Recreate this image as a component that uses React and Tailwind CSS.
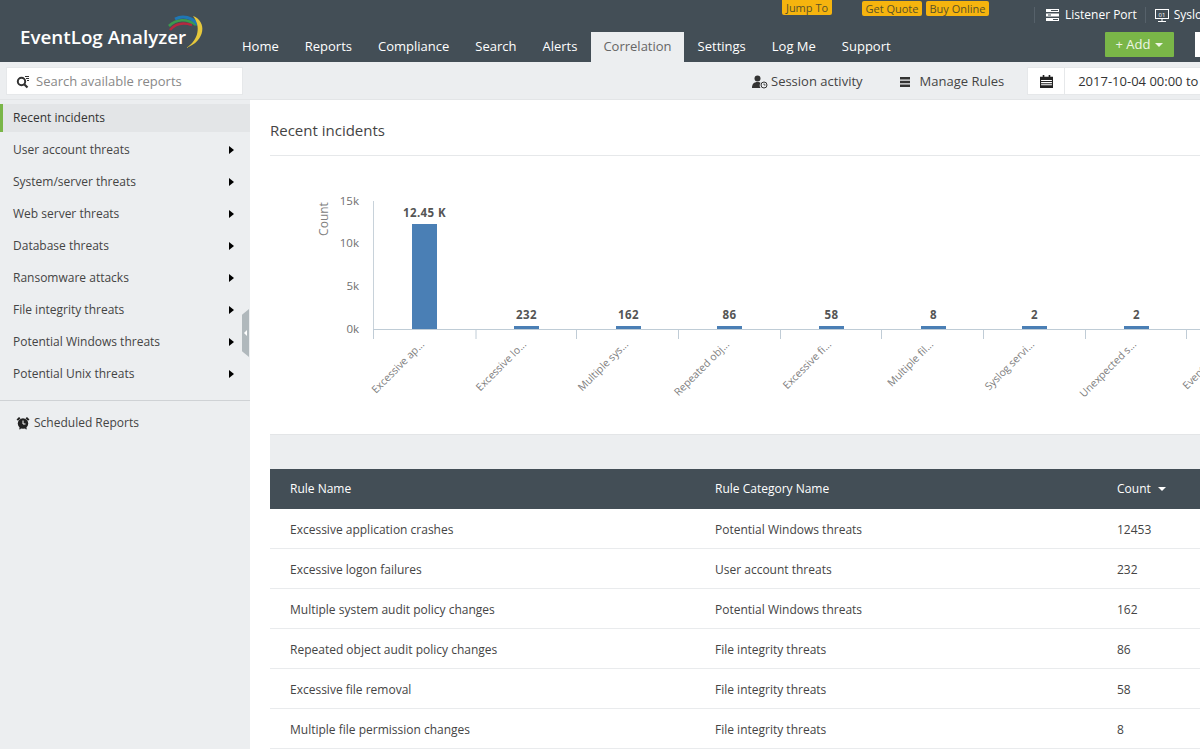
import React from 'react';

const navItems = ['Home', 'Reports', 'Compliance', 'Search', 'Alerts', 'Correlation', 'Settings', 'Log Me', 'Support'];

const sideItems = [
  'User account threats',
  'System/server threats',
  'Web server threats',
  'Database threats',
  'Ransomware attacks',
  'File integrity threats',
  'Potential Windows threats',
  'Potential Unix threats',
];

const rows = [
  ['Excessive application crashes', 'Potential Windows threats', '12453'],
  ['Excessive logon failures', 'User account threats', '232'],
  ['Multiple system audit policy changes', 'Potential Windows threats', '162'],
  ['Repeated object audit policy changes', 'File integrity threats', '86'],
  ['Excessive file removal', 'File integrity threats', '58'],
  ['Multiple file permission changes', 'File integrity threats', '8'],
];

const bars = [
  { x: 142, h: 105, value: '12.45 K', label: 'Excessive ap...' },
  { x: 244, h: 3, value: '232', label: 'Excessive lo...' },
  { x: 346, h: 3, value: '162', label: 'Multiple sys...' },
  { x: 447, h: 3, value: '86', label: 'Repeated obj...' },
  { x: 549, h: 3, value: '58', label: 'Excessive fi...' },
  { x: 651, h: 3, value: '8', label: 'Multiple fil...' },
  { x: 752, h: 3, value: '2', label: 'Syslog servi...' },
  { x: 854, h: 3, value: '2', label: 'Unexpected s...' },
];

const ticks = [103, 205.5, 306, 408, 510, 611, 713, 815, 916];

const Logo = () => (
  <svg width="46" height="36" viewBox="0 0 46 36" className="absolute left-[167px] top-[15px]">
    <path d="M3 15 C8 9 16 7 25 10" fill="none" stroke="#b5293f" strokeWidth="2.4" />
    <path d="M2 11 C9 4 20 3 29 10" fill="none" stroke="#3c9a4e" strokeWidth="2.6" />
    <path d="M8 4 C16 0 25 2 31 10" fill="none" stroke="#1f77b4" strokeWidth="3" />
    <path d="M26 1 C40 6 39 26 19 33 C32 25 34 11 26 1 Z" fill="#e6c83c" />
  </svg>
);

const Chart = () => (
  <svg width="930" height="278" viewBox="0 0 930 278" className="block" style={{ fontFamily: '"Open Sans", sans-serif' }}>
    <text x="0" y="0" transform="translate(58 63) rotate(-90)" textAnchor="middle" fontSize="12" fill="#808080">Count</text>
    {[['15k', 49], ['10k', 91], ['5k', 134], ['0k', 177]].map(([t, y]) => (
      <text key={t} x="89" y={y} textAnchor="end" fontSize="11.5" fill="#707070">{t}</text>
    ))}
    <path d="M103.5 45V173" stroke="#c8d2da" />
    <path d="M103 173.5H930" stroke="#bfccd6" />
    {ticks.map((x) => (
      <path key={x} d={`M${x + 0.5} 173V183`} stroke="#c0ccd6" />
    ))}
    {bars.map((b) => (
      <g key={b.label}>
        <rect x={b.x} y={173 - b.h} width="25" height={b.h} fill="#4a7fb5" />
        <text x={b.x + 12.5} y={173 - b.h - 7} textAnchor="middle" fontSize="11.5" fontWeight="700" letterSpacing="0.4" fill="#555">{b.value}</text>
        <text transform={`translate(${b.x + 13} 189) rotate(-45)`} textAnchor="end" fontSize="10.5" fill="#808080">{b.label}</text>
      </g>
    ))}
    <text transform="translate(917 234) rotate(-45)" fontSize="10.5" fill="#808080">Event log...</text>
  </svg>
);

export default function App() {
  return (
    <div className="w-[1200px] h-[749px] overflow-hidden flex flex-col bg-white text-[#444] font-['Open_Sans',sans-serif]">
      {/* Header */}
      <header className="h-[62px] shrink-0 flex bg-[#434e56] text-white">
        <div className="relative w-[229px] shrink-0 pl-[20px] pt-[24px]">
          <span className="text-[18.8px] leading-[26px] font-semibold whitespace-nowrap">EventLog Analyzer</span>
          <Logo />
        </div>
        <div className="w-[971px] shrink-0 flex flex-col overflow-hidden">
          <div className="h-[32px] flex items-start text-[11px] text-[#5a5228]">
            <span className="shrink-0 ml-[553px] w-[50px] h-[15px] leading-[15px] text-center bg-[#f6b40e] rounded-b-[2px]">Jump To</span>
            <span className="shrink-0 ml-[30px] mt-px w-[60px] h-[15px] leading-[15px] text-center bg-[#f6b40e] rounded-[2px]">Get Quote</span>
            <span className="shrink-0 ml-[4px] mt-px w-[63px] h-[15px] leading-[15px] text-center bg-[#f6b40e] rounded-[2px]">Buy Online</span>
            <span className="shrink-0 ml-[45px] mt-[7px] h-[16px] w-px bg-[#56616a]" />
            <span className="shrink-0 ml-[11px] mt-[7px] h-[16px] flex items-center gap-[6px] text-[12px] text-white whitespace-nowrap">
              <svg width="13" height="12" viewBox="0 0 13 12" fill="#fff">
                <path d="M0 0h13v3H0zM0 4.500h13v3H0zM0 9h13v3H0z" />
                <path d="M5 1h7v1H5zM2 5.500h3v1H2zM7 10h5v1H7z" fill="#434e56" />
              </svg>
              Listener Port
            </span>
            <span className="shrink-0 ml-[8px] mt-[7px] h-[16px] w-px bg-[#56616a]" />
            <span className="shrink-0 ml-[9px] mt-[7px] h-[16px] flex items-center gap-[5px] text-[12px] text-white whitespace-nowrap">
              <svg width="14" height="13" viewBox="0 0 14 13" fill="none" stroke="#fff">
                <rect x="0.500" y="0.500" width="13" height="9" />
                <path d="M3 12.500h8M7 10v2" />
                <text x="7" y="7.500" textAnchor="middle" fontSize="6" fill="#fff" stroke="none">01</text>
              </svg>
              Syslog
            </span>
          </div>
          <div className="h-[30px] flex items-start">
            <nav className="flex items-stretch h-[30px] shrink-0 pl-px text-[13px] gap-[2px] w-[876px]">
              {navItems.map((item) => (
                <span
                  key={item}
                  className={
                    item === 'Correlation'
                      ? 'px-3 leading-[29px] bg-[#eceef0] text-[#666]'
                      : 'px-3 leading-[29px] text-white'
                  }
                >
                  {item}
                </span>
              ))}
            </nav>
            <button className="w-[69px] h-[25px] shrink-0 flex items-center justify-center gap-[5px] bg-[#7ab648] text-[13px] text-[#eef6e4] rounded-[1px]">
              + Add
              <span className="w-0 h-0 border-x-[4px] border-x-transparent border-t-[4px] border-t-[#eef6e4]" />
            </button>
            <span className="ml-[21px] w-[10px] h-[25px] shrink-0 bg-white" />
          </div>
        </div>
      </header>

      <div className="flex flex-1 min-h-0">
        {/* Sidebar */}
        <aside className="relative w-[250px] shrink-0 bg-[#eceef0] text-[12px] text-[#444]">
          <div className="h-[38px] pt-[5px] px-[6px] border-b border-[#e3e5e7]">
            <div className="h-[28px] w-[237px] flex items-center gap-[6px] pl-[9px] pt-px bg-white border border-[#e6e8ea] text-[13px] text-[#888]">
              <svg width="14" height="14" viewBox="0 0 14 14" fill="none" stroke="#333" className="shrink-0">
                <circle cx="5.500" cy="6.500" r="3.700" strokeWidth="2" />
                <path d="M8 9l3.500 3.500" strokeWidth="2.200" />
                <path d="M9 1.500h4M10 3.500h3M11 5.500h2" strokeWidth="1" />
              </svg>
              Search available reports
            </div>
          </div>
          <div className="h-[28px] mt-[4px] flex items-center pl-[10px] border-l-[3px] border-[#7ab648] bg-[#e3e5e7] text-[#333]">
            Recent incidents
          </div>
          <ul className="mb-[10px] pt-[2px]">
            {sideItems.map((item) => (
              <li key={item} className="h-[32px] flex items-center justify-between pl-[13px] pr-[16px]">
                {item}
                <span className="w-0 h-0 border-y-[4px] border-y-transparent border-l-[5px] border-l-black" />
              </li>
            ))}
          </ul>
          <div className="h-[44px] flex items-center gap-[4px] pl-[16px] border-t border-[#cfd2d5]">
            <svg width="14" height="14" viewBox="0 0 14 14" className="shrink-0">
              <circle cx="7" cy="7.500" r="5.200" fill="#222" />
              <path d="M7 4.500V8h2.500" fill="none" stroke="#fff" />
              <path d="M0.500 3.500L3 1l1.500 1.200L2 4.800zM13.500 3.500L11 1 9.500 2.200 12 4.800zM3 13l1.500-2 1 .8L4 13.500zM11 13L9.500 11l-1 .8L10 13.500z" fill="#222" />
            </svg>
            Scheduled Reports
          </div>
          {/* collapse handle */}
          <div className="absolute left-[242px] top-[247px] w-[7px] h-[48px] bg-[#b0b8bc] flex items-center justify-center [clip-path:polygon(0_12%,100%_0,100%_100%,0_88%)]">
            <span className="w-0 h-0 border-y-[3px] border-y-transparent border-r-[3px] border-r-white" />
          </div>
        </aside>

        {/* Main */}
        <main className="w-[950px] shrink-0 flex flex-col">
          <div className="h-[38px] shrink-0 flex items-start bg-[#eceef0] border-b border-[#e3e5e7] text-[13px] text-[#444]">
            <span className="ml-[502px] h-[40px] shrink-0 flex items-center gap-[3px] whitespace-nowrap">
              <svg width="16" height="14" viewBox="0 0 16 14" className="shrink-0">
                <circle cx="5.500" cy="3.500" r="3" fill="#333" />
                <path d="M0 13c0-4 2-6 5.500-6 1.500 0 2.500.4 3 1-1 1.200-1.200 3.500 0 5z" fill="#333" />
                <circle cx="12" cy="10" r="3" fill="none" stroke="#333" />
                <path d="M12 8.500V10h1.500" fill="none" stroke="#333" strokeWidth="0.800" />
              </svg>
              Session activity
            </span>
            <span className="ml-[37px] h-[40px] shrink-0 flex items-center gap-[10px] whitespace-nowrap">
              <svg width="10" height="10" viewBox="0 0 10 10" fill="#333" className="shrink-0">
                <path d="M0 0h10v2.500H0zM0 3.700h10v2.500H0zM0 7.500h10V10H0z" />
              </svg>
              Manage Rules
            </span>
            <div className="ml-[23px] mt-[5px] h-[28px] w-[200px] shrink-0 flex bg-white border border-[#e6e8ea]">
              <span className="w-[37px] shrink-0 flex items-center justify-center border-r border-[#e6e8ea]">
                <svg width="13" height="13" viewBox="0 0 12 12" fill="#222">
                  <path d="M0 1.500h2.500V0h1.500v1.500h4V0h1.500v1.500H12V12H0zM1 4.500V5.500h10v-1zM1 6.500v1h10v-1zM1 8.500v1h10v-1z" fillRule="evenodd" />
                </svg>
              </span>
              <span className="pl-[13px] leading-[26px] text-[13px] text-[#333] whitespace-nowrap">2017-10-04 00:00 to 2017-10-10</span>
            </div>
          </div>

          <div className="pl-[20px] flex-1 min-h-0">
            <div className="h-[56px] pt-[19px] border-b border-[#e6e8ea] text-[15px] leading-[22px] text-[#444]">
              Recent incidents
            </div>
            <Chart />
            <div className="h-[35px] bg-[#eceef0] border-t border-[#e3e5e7]" />
            <div className="h-[40px] flex items-center bg-[#434e56] text-white text-[12px]">
              <span className="ml-[20px] w-[425px]">Rule Name</span>
              <span className="w-[402px]">Rule Category Name</span>
              <span className="flex items-center gap-[7px]">
                Count
                <span className="w-0 h-0 border-x-[4px] border-x-transparent border-t-[4px] border-t-white" />
              </span>
            </div>
            {rows.map((r) => (
              <div key={r[0]} className="h-[40px] pt-[2px] flex items-center border-b border-[#e9ebed] text-[12px] text-[#444]">
                <span className="ml-[20px] w-[425px]">{r[0]}</span>
                <span className="w-[402px]">{r[1]}</span>
                <span>{r[2]}</span>
              </div>
            ))}
          </div>
        </main>
      </div>
    </div>
  );
}
